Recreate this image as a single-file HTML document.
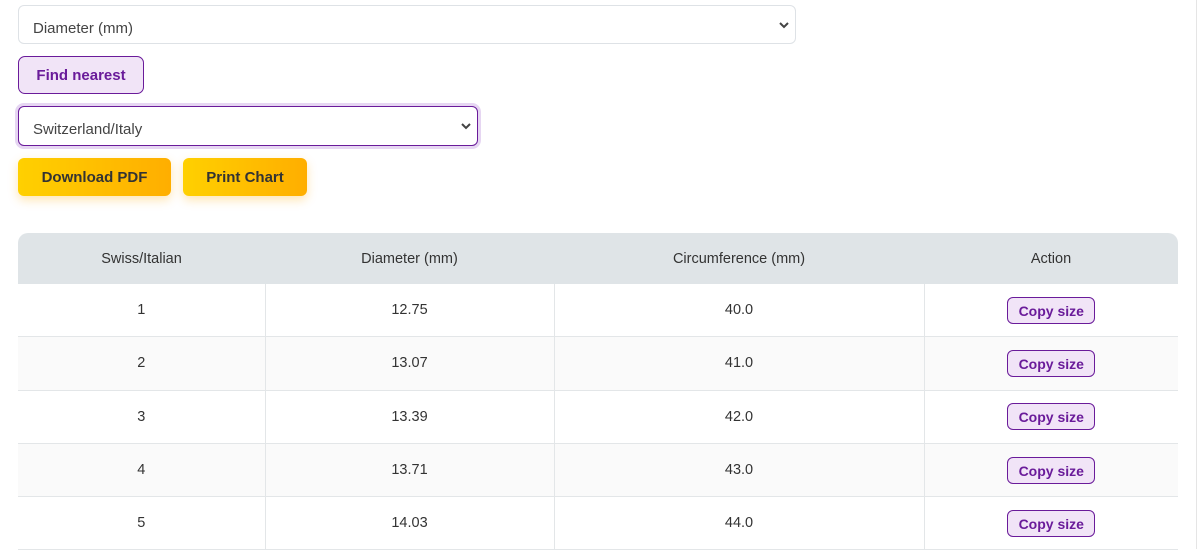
<!DOCTYPE html>
<html><head><style>
body{margin:0;background:#fff;font-family:"Liberation Sans",Arial,sans-serif;color:#333;width:1199px;height:549px;overflow:hidden;position:relative}
.sel{position:absolute;left:18px;box-sizing:border-box;border:1px solid #dee2e6;border-radius:6px;background:#fff;font-size:15px;color:#444;padding-left:14px}
.sel span{position:absolute;top:13px}
.chev{position:absolute;right:6px;top:50%;margin-top:-4px}
.fn{position:absolute;left:18px;top:56px;width:126px;height:38px;box-sizing:border-box;border:1px solid #6a1b9a;border-radius:7px;background:#f1e4f7;color:#6a1b9a;font-weight:bold;font-size:15px;text-align:center;line-height:38px}
.yb{position:absolute;top:158px;height:38px;border-radius:6px;background:linear-gradient(90deg,#ffd000,#ffae00);font-weight:bold;font-size:15px;color:#333;text-align:center;line-height:40px;box-shadow:0 4px 10px rgba(255,170,0,.3)}
table{position:absolute;left:18px;top:233px;width:1160px;border-collapse:collapse;font-size:14.5px;table-layout:fixed}
th{background:#dfe4e7;height:49px;font-weight:normal;color:#333;font-size:14.5px}
tr:first-child th:first-child{border-top-left-radius:10px}
tr:first-child th:last-child{border-top-right-radius:10px}
td{height:52.3px;border-bottom:1px solid #e3e6e8;border-left:1px solid #e3e6e8;text-align:center;padding:0}
td:first-child{border-left:none}
tr:nth-child(odd) td{background:#fafafa}
.cb{display:inline-block;width:88px;height:27px;box-sizing:border-box;border:1px solid #6a1b9a;border-radius:6px;background:#f1e4f7;color:#6a1b9a;font-size:14px;line-height:26px;font-weight:bold}
.sb{position:absolute;left:1196px;top:0;width:1px;height:549px;background:#e5e5e5}
</style></head><body>
<div class="sel" style="top:5px;width:778px;height:39px"><span style="top:14px">Diameter (mm)</span><svg class="chev" width="10" height="8" viewBox="0 0 10 8"><path d="M1 2l4 4 4-4" stroke="#444" stroke-width="2" fill="none"/></svg></div>
<div class="fn">Find nearest</div>
<div class="sel" style="top:106px;width:460px;height:40px;border:1.5px solid #6a1b9a;box-shadow:0 0 0 3px #e6d6f2"><span style="top:14px">Switzerland/Italy</span><svg class="chev" width="10" height="8" viewBox="0 0 10 8"><path d="M1 2l4 4 4-4" stroke="#444" stroke-width="2" fill="none"/></svg></div>
<div class="yb" style="left:18px;width:153px">Download PDF</div>
<div class="yb" style="left:183px;width:124px">Print Chart</div>
<table>
<colgroup><col style="width:247px"><col style="width:289px"><col style="width:370px"><col style="width:254px"></colgroup>
<tr><th>Swiss/Italian</th><th>Diameter (mm)</th><th>Circumference (mm)</th><th>Action</th></tr>
<tr><td>1</td><td>12.75</td><td>40.0</td><td><span class="cb">Copy size</span></td></tr>
<tr><td>2</td><td>13.07</td><td>41.0</td><td><span class="cb">Copy size</span></td></tr>
<tr><td>3</td><td>13.39</td><td>42.0</td><td><span class="cb">Copy size</span></td></tr>
<tr><td>4</td><td>13.71</td><td>43.0</td><td><span class="cb">Copy size</span></td></tr>
<tr><td>5</td><td>14.03</td><td>44.0</td><td><span class="cb">Copy size</span></td></tr>
</table>
<div class="sb"></div>
</body></html>
